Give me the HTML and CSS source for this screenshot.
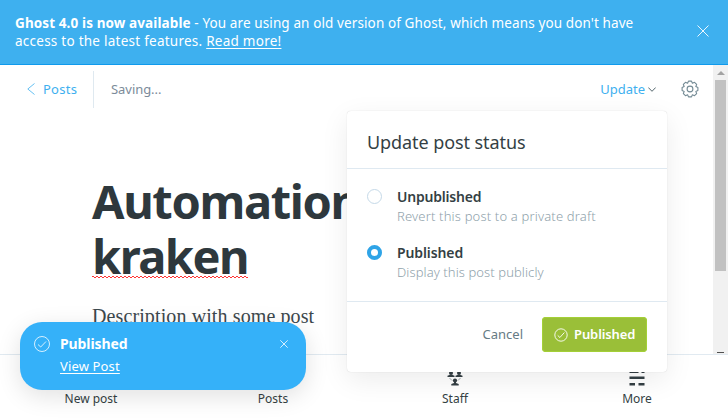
FILE: index.html
```html
<!DOCTYPE html>
<html lang="en">
<head>
<meta charset="utf-8">
<title>Ghost editor</title>
<link rel="stylesheet" href="styles.css">
</head>
<body>
<div class="app">
  <header class="alert">
    <p class="alert-text"><span class="alert-line"><b>Ghost 4.0 is now available</b> - You are using an old version of Ghost, which means you don't have</span><br><span class="alert-line second">access to the latest features. <a>Read more!</a></span></p>
    <svg class="alert-close" viewBox="0 0 12 12"><path d="M.5.5l11 11M11.5.5l-11 11"/></svg>
  </header>
  <main class="viewport">
    <section class="editor">
      <div class="toolbar">
        <a class="back"><svg viewBox="0 0 8 12"><path d="M7.5.5L.8 6l6.7 5.5"/></svg><span>Posts</span></a>
        <span class="saving">Saving...</span>
        <a class="update"><span>Update</span><svg viewBox="0 0 8 5"><path d="M.3.5L4 4.300 7.700.5"/></svg></a>
        <svg class="gear" viewBox="0 0 18 18"><path d="M7.5 1.100h3L11.400 3.200 13.530 2.350 15.650 4.470 14.800 6.600 16.900 7.500v3L14.800 11.400 15.650 13.530 13.530 15.650 11.400 14.800 10.500 16.900h-3L6.600 14.800 4.470 15.650 2.350 13.530 3.200 11.400 1.100 10.500v-3L3.200 6.600 2.350 4.470 4.470 2.350 6.600 3.200z"/><circle cx="9" cy="9" r="2.900"/></svg>
      </div>
      <h1 class="title"><span>Automation</span><br><span class="misspelled">kraken</span></h1>
      <p class="body-copy">Description with some post</p>
    </section>
    <aside class="scrollbar"><i class="arrow-up"></i><i class="thumb"></i><i class="arrow-down"></i></aside>
  </main>
  <nav class="tabs">
    <a class="tab"><svg viewBox="0 0 16 16"></svg><span>New post</span></a>
    <a class="tab"><svg viewBox="0 0 16 16"></svg><span>Posts</span></a>
    <a class="tab"><svg viewBox="0 0 16 16"><g><circle cx="4" cy="3" r="2"/><path d="M.5 7V5.700L3 4.700h2l2.500 1V7z"/><circle cx="12" cy="3" r="2"/><path d="M8.500 7V5.700l2.500-1h2l2.500 1V7z"/><circle cx="8" cy="10.500" r="2.100"/><path d="M4.300 15.500v-1.400L7 13.100V12h2v1.100l2.700 1v1.400z"/></g><path class="link" d="M2.500 8l2.500 2.500M13.500 8L11 10.500"/></svg><span>Staff</span></a>
    <a class="tab"><svg viewBox="0 0 16 16"><path d="M.5 1h9v2h-9zM12.500 1h3v2h-3zM.5 6.500h15v2.500H.5zM.5 13H6v2.500H.5zM9.500 13h6v2.500h-6z"/></svg><span>More</span></a>
  </nav>

  <div class="dialog">
    <h2 class="dialog-title">Update post status</h2>
    <div class="options">
      <label class="option"><i class="radio"></i><span class="option-text"><b class="unpublished">Unpublished</b><small>Revert this post to a private draft</small></span></label>
      <label class="option"><i class="radio checked"></i><span class="option-text"><b>Published</b><small class="public">Display this post publicly</small></span></label>
    </div>
    <div class="actions"><a class="cancel">Cancel</a><a class="confirm"><svg viewBox="0 0 14 14"><circle cx="7" cy="7" r="6.200"/><path d="M3.700 7.400l2.200 2.100 4.500-5"/></svg><span>Published</span></a></div>
  </div>

  <div class="toast">
    <svg class="toast-check" viewBox="0 0 16 16"><circle cx="8" cy="8" r="7.500"/><path d="M4 8.500l2.700 2.500L12 5.500"/></svg>
    <div class="toast-text"><b>Published</b><a>View Post</a></div>
    <svg class="toast-close" viewBox="0 0 8 8"><path d="M.3.3l7.400 7.400M7.700.3L.3 7.700"/></svg>
  </div>
</div>
</body>
</html>
```
FILE: styles.css
```css
* { box-sizing: border-box; }
body { margin: 0; font-family: "Noto Sans", "Open Sans", sans-serif; color: #343f44; }
.app { position: relative; width: 728px; height: 418px; overflow: hidden; display: flex; flex-direction: column; background: #fff; }
svg { display: block; fill: none; stroke: currentColor; }
h1, h2, p { margin: 0; }

.alert { height: 65px; flex: none; display: flex; justify-content: space-between; align-items: flex-start; padding: 14px 19px 0 15px; background: #3eb0ef; border-bottom: 1px solid #0f9aec; color: #fff; }
.alert-text { font-size: 13.5px; line-height: 18px; white-space: nowrap; letter-spacing: .11px; }
.alert-text .second { letter-spacing: .25px; }
.alert a { text-decoration: underline; text-underline-offset: 2px; text-decoration-skip-ink: none; }
.alert-close { width: 12px; height: 12px; margin-top: 11px; stroke-width: .9; }

.viewport { height: 289px; flex: none; display: flex; }
.editor { width: 713px; overflow: hidden; }
.toolbar { display: flex; align-items: center; height: 48px; padding: 0 14px 0 27px; font-size: 13px; letter-spacing: .1px; }
.back { display: flex; align-items: center; gap: 8px; width: 67px; height: 37px; color: #3eb0ef; border-right: 1px solid #dfe9f0; }
.back span { letter-spacing: .25px; }
.back svg { width: 8px; height: 12px; stroke-width: .8; }
.saving { margin-left: 17px; color: #7c8b9a; letter-spacing: -.05px; }
.update { display: flex; align-items: center; gap: 3px; margin-left: auto; color: #3eb0ef; letter-spacing: 0; }
.update svg { width: 8px; height: 5px; color: #54666d; }
.gear { width: 18px; height: 18px; margin-left: 25px; color: #738a94; stroke-width: 1.1; stroke-linejoin: round; }
.title { margin: 61px 0 0 92px; font-size: 47px; line-height: 55px; font-weight: 700; letter-spacing: -1.35px; color: #2e383d; white-space: nowrap; }
.misspelled { letter-spacing: -1.5px; background: repeating-linear-gradient(90deg, #f33 0 2px, transparent 2px 4px) 0 52px / 100% 1px no-repeat, repeating-linear-gradient(90deg, transparent 0 2px, #f33 2px 4px) 0 53px / 100% 1px no-repeat; }
.body-copy { margin: 17px 0 0 92px; font: 20px/30px "Liberation Serif", serif; letter-spacing: .11px; color: #3c484d; white-space: nowrap; }

.scrollbar { width: 15px; background: #f1f1f1; display: flex; flex-direction: column; align-items: center; }
.arrow-up { border: 4px solid transparent; border-top: 0; border-bottom-color: #a3a3a3; margin-top: 6px; }
.thumb { width: 11px; height: 191px; margin-top: 5px; background: #c1c1c1; }
.arrow-down { width: 7px; height: 1px; margin-top: auto; margin-bottom: 1px; background: #505050; }

.tabs { flex: 1; display: grid; grid-template-columns: repeat(4, 182px); border-top: 1px solid #e1eaf1; background: #fff; }
.tab { display: flex; flex-direction: column; align-items: center; padding-top: 15px; gap: 4px; font-size: 12px; line-height: 18px; }
.tab svg { width: 16px; height: 16px; fill: #343f44; stroke: none; }
.tab .link { fill: none; stroke: #78858a; stroke-width: .7; }

.dialog { position: absolute; left: 347px; top: 111px; width: 320px; height: 261px; background: #fff; border-radius: 4px; box-shadow: 0 0 1px rgba(0,0,0,.2), 0 8px 28px rgba(0,0,0,.08); }
.dialog-title { height: 58px; padding: 18px 20px 0; border-bottom: 1px solid #dfe9f1; font-size: 18px; line-height: 27px; font-weight: 400; letter-spacing: -.08px; white-space: nowrap; }
.options { height: 133px; padding: 18px 20px 0; border-bottom: 1px solid #dfe9f1; display: flex; flex-direction: column; gap: 16px; }
.option { display: flex; gap: 15px; height: 40px; white-space: nowrap; }
.radio { width: 15px; height: 15px; margin-top: 2px; border: 1px solid #c5d9e8; border-radius: 50%; flex: none; }
.radio.checked { border: 4px solid #2fa4e7; }
.option-text { display: flex; flex-direction: column; }
.option b { font-size: 14px; line-height: 20px; font-weight: 600; letter-spacing: -.1px; }
.option .unpublished { letter-spacing: -.2px; }
.option small { font-size: 13px; line-height: 19px; font-weight: 300; letter-spacing: .17px; color: #8fa2ab; }
.option .public { letter-spacing: .09px; }
.actions { display: flex; align-items: center; justify-content: flex-end; gap: 19px; padding: 15px 20px; font-size: 13px; }
.cancel { color: #667b85; margin-top: -2px; }
.confirm { display: flex; align-items: center; gap: 6px; width: 105px; height: 35px; padding-left: 12px; border-radius: 4px; background: #9abf38; color: #fff; font-weight: 600; letter-spacing: -.1px; box-shadow: inset 0 0 0 1px #a4d037; }
.confirm svg { width: 14px; height: 14px; stroke-width: .9; }
.confirm span { margin-top: -2px; }

.toast { position: absolute; left: 20px; top: 322px; width: 286px; height: 68px; display: flex; padding: 11px 18px 0 14px; border-radius: 22px; background: #35b1f9; color: #fff; box-shadow: 0 6px 24px rgba(0,0,0,.12); }
.toast-check { width: 16px; height: 16px; margin-top: 3px; stroke-width: .8; }
.toast-text { display: flex; flex-direction: column; align-items: flex-start; margin: 0 auto 0 10px; }
.toast b { font-size: 14px; line-height: 22px; letter-spacing: -.1px; }
.toast a { font-size: 13px; line-height: 22px; letter-spacing: .15px; text-decoration: underline; text-underline-offset: 2px; }
.toast-close { width: 8px; height: 8px; margin-top: 7px; stroke-width: .8; }
```
